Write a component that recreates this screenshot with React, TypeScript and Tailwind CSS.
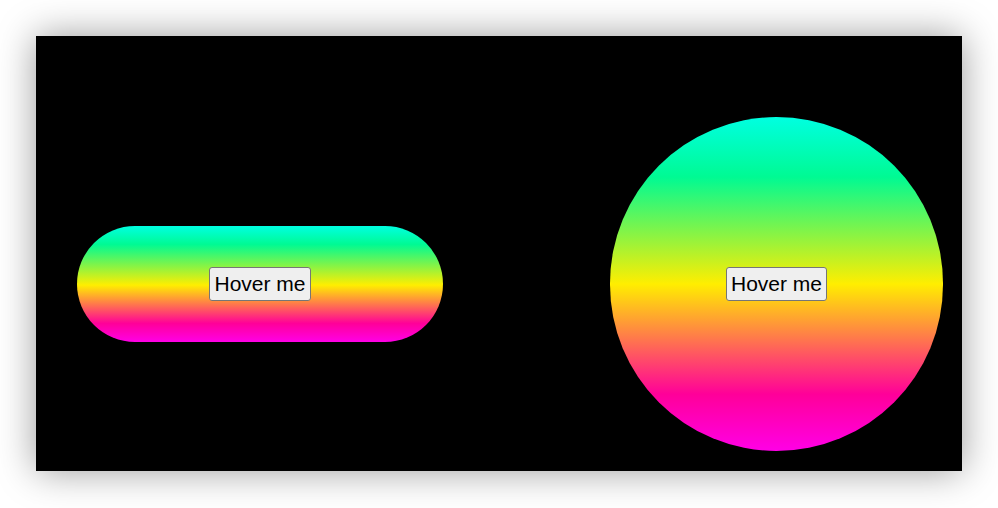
import React from 'react';

const HoverButton: React.FC = () => (
  <button className="rounded-[3px] border border-[#767676] bg-[#efefef] px-1 py-[4px] text-[21px] leading-[24px] text-black [font-family:'Liberation_Sans',Arial,sans-serif]">
    Hover me
  </button>
);

export default function App() {
  return (
    <div className="flex h-[508px] w-[998px] bg-white pl-[36px] pt-[36px]">
      <div className="flex h-[435px] w-[926px] items-center justify-between bg-black pl-[41px] pr-[19px] pt-[81px] pb-[20px] shadow-[0_0_36px_rgba(0,0,0,0.4)]">
        <div className="flex h-[116px] w-[366px] items-center justify-center rounded-full bg-[linear-gradient(to_bottom,#00ffe1_0%,#00fa93_16%,#ffee00_51%,#ff0099_84%,#ff00e6_100%)]">
          <HoverButton />
        </div>
        <div className="flex h-[334px] w-[333px] items-center justify-center rounded-full bg-[linear-gradient(to_bottom,#00ffe1_0%,#00fa93_18%,#ffee00_50%,#ff0099_83%,#ff00e6_100%)]">
          <HoverButton />
        </div>
      </div>
    </div>
  );
}
